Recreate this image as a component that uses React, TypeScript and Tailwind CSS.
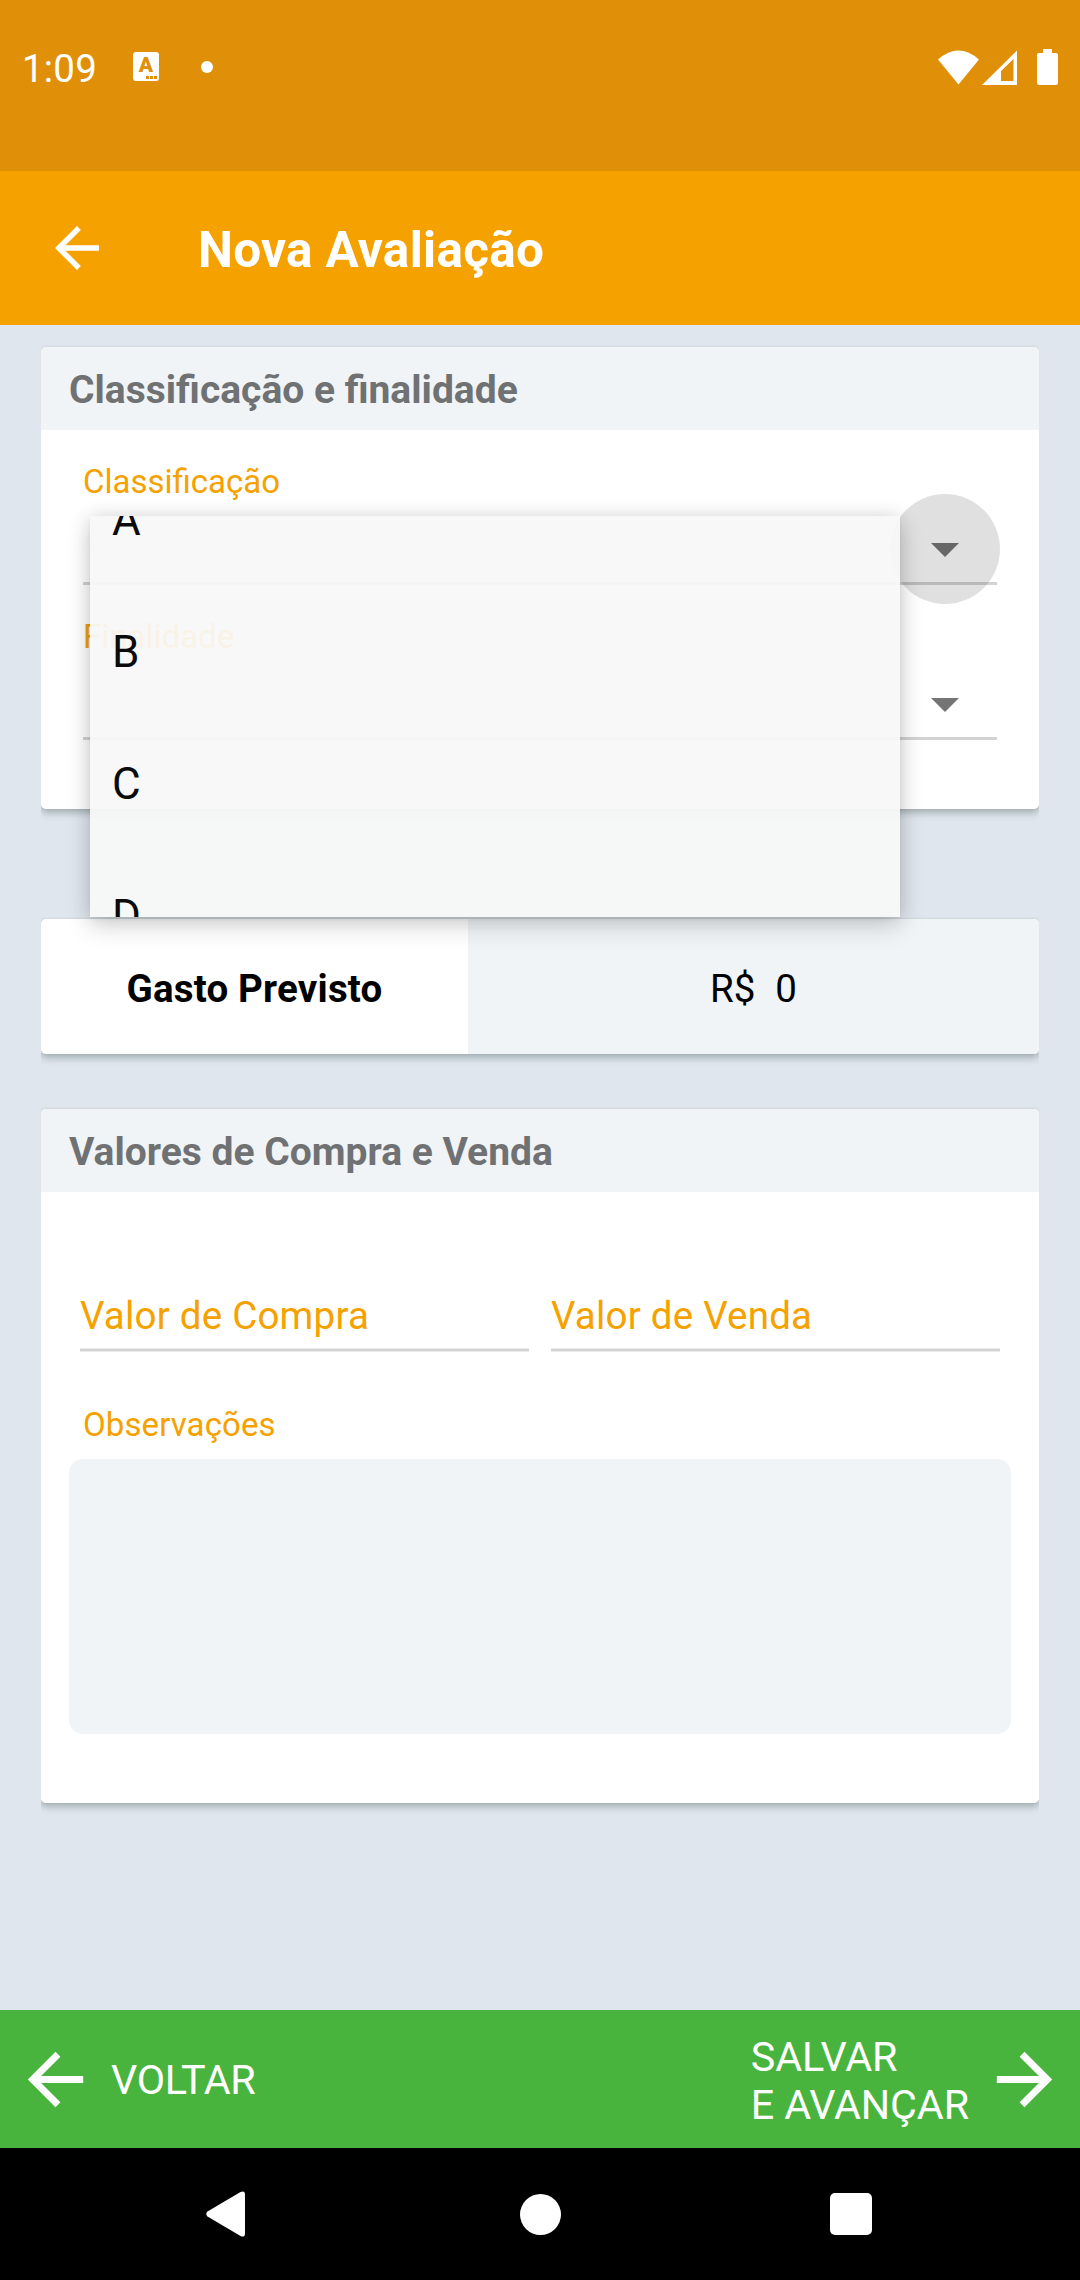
import React from "react";

const ARROW_LEFT = "M20 11H7.83l5.59-5.59L12 4l-8 8 8 8 1.41-1.41L7.83 13H20v-2z";
const ARROW_RIGHT = "M12 4l-1.41 1.41L16.17 11H4v2h12.17l-5.58 5.59L12 20l8-8z";

function StatusBar() {
  return (
    <div className="h-[171px] bg-[#df9008] flex items-start justify-between pl-[22px] pr-[22px]">
      <div className="flex items-center h-[94px] mt-[22px] text-white">
        <span className="w-[111px] text-[38.5px] leading-[46px] tracking-[0.2px]">1:09</span>
        <span className="relative w-[26px] h-[29px] -mt-[5px] rounded-[3px] bg-white block">
          <span className="absolute inset-x-0 top-[3px] text-center text-[21px] leading-[21px] font-black text-[#df9008]">A</span>
          <span className="absolute right-[2px] bottom-[2px] flex gap-[1px]">
            <i className="block size-[3px] bg-[#df9008]" />
            <i className="block size-[3px] bg-[#df9008]" />
            <i className="block size-[3px] bg-[#df9008]" />
          </span>
        </span>
        <span className="ml-[42px] size-3 -mt-[4px] rounded-full bg-white" />
      </div>
      <svg className="mt-[49px]" width="120" height="37" viewBox="938 49 120 37" fill="#fff">
        <path d="M938 59.5Q958.500 41.500 979 59.500L958.500 84.500z" />
        <path fillRule="evenodd" d="M982 85L1017 50.500V85zM1001 71V81H1013.500V59z" />
        <path d="M1043 49h9v4h4a2 2 0 0 1 2 2v28a2 2 0 0 1-2 2h-17a2 2 0 0 1-2-2V55a2 2 0 0 1 2-2h4z" />
      </svg>
    </div>
  );
}

function Card({ className, children }: { className: string; children: React.ReactNode }) {
  return (
    <section className={"[clip-path:inset(-2px_0_-14px_0)] " + className}>
      <div className="h-full overflow-hidden rounded-[5px] bg-white">{children}</div>
    </section>
  );
}

const CARD_SHADOW = "rounded-[5px] shadow-[0_4px_7px_rgba(60,80,80,0.36),0_0_2px_rgba(0,0,0,0.1)]";

function CardHeader({ children }: { children: React.ReactNode }) {
  return (
    <h2 className="h-[83px] bg-[#f0f4f7] pl-[28px] text-[39px] leading-[86px] font-bold text-[#6f7173]">
      {children}
    </h2>
  );
}

function SelectField({ label, active }: { label: string; active?: boolean }) {
  return (
    <div className="relative h-[123px] border-b-[3px] border-[#d3d3d3]">
      {active && <span className="absolute right-[-3px] top-[32px] size-[110px] rounded-full bg-black/12" />}
      <label className="block text-[33px] leading-[39px] text-[#f5a100]">{label}</label>
      <svg className="absolute right-[38px] top-[81px]" width="28" height="14" viewBox="0 0 28 14">
        <path d="M0 0H28L14 14z" fill={active ? "#676767" : "#757575"} />
      </svg>
    </div>
  );
}

function ValueField({ label }: { label: string }) {
  return (
    <div className="flex-1">
      <div className="h-[55px] text-[38.5px] leading-[46px] tracking-[0.22px] text-[#f5a100]">{label}</div>
      <div className="h-[4px] bg-[#d3d3d3] border-y border-[#ebebeb]" />
    </div>
  );
}

function OptionsPopup() {
  return (
    <div className="absolute left-[90px] top-[191px] w-[810px] h-[401px] bg-[#f7f7f7]/[0.935] shadow-[0_10px_24px_rgba(0,0,0,0.15),0_0_18px_rgba(0,0,0,0.12),0_2px_3px_rgba(0,0,0,0.05)]">
      <ul className="h-full overflow-hidden">
        <li className="-mt-[62px] h-[132px] pl-[22px] text-[44px] leading-[132px] text-[#0b0b0b]">A</li>
        {["B", "C", "D"].map((o) => (
          <li key={o} className="h-[132px] pl-[22px] text-[44px] leading-[132px] text-[#0b0b0b]">{o}</li>
        ))}
      </ul>
    </div>
  );
}

export default function App() {
  return (
    <div className="w-[1080px] h-[2280px] overflow-hidden flex flex-col bg-[#dfe6ed] font-['Roboto',sans-serif]">
      <StatusBar />
      <header className="h-[154px] bg-[#f5a100] flex items-center">
        <svg className="ml-[44px]" width="66" height="66" viewBox="0 0 24 24" fill="#fff">
          <path d={ARROW_LEFT} />
        </svg>
        <h1 className="ml-[88px] mt-[4px] text-[49.5px] leading-[58px] font-bold tracking-[0.3px] text-white">Nova Avaliação</h1>
      </header>

      <main className="relative flex-1 px-[41px] pt-[22px]">
        <Card className={"h-[462px] " + CARD_SHADOW}>
          <CardHeader>Classificação e finalidade</CardHeader>
          <div className="flex flex-col gap-8 pt-8 px-[42px]">
            <SelectField label="Classificação" active />
            <SelectField label="Finalidade" />
          </div>
        </Card>

        <Card className={"mt-[110px] h-[135px] " + CARD_SHADOW}>
          <div className="flex h-full text-[38.5px] text-black leading-[46px] items-stretch">
            <div className="w-[427px] flex items-center justify-center pt-[4px] font-bold tracking-[0.2px]">Gasto Previsto</div>
            <div className="flex-1 flex items-center justify-center pt-[4px] bg-[#f0f4f7] whitespace-pre tracking-[0.2px]">R$  0</div>
          </div>
        </Card>

        <Card className={"mt-[55px] h-[694px] " + CARD_SHADOW}>
          <CardHeader>Valores de Compra e Venda</CardHeader>
          <div className="flex gap-[22px] px-[39px] pt-[101px]">
            <ValueField label="Valor de Compra" />
            <ValueField label="Valor de Venda" />
          </div>
          <div className="mt-[53px] ml-[42px] text-[33px] leading-[39px] tracking-[0.1px] text-[#f5a100]">Observações</div>
          <div className="mt-[15px] mx-[28px] h-[275px] rounded-[14px] bg-[#f0f4f7]" />
        </Card>

        <OptionsPopup />
      </main>

      <footer className="h-[138px] bg-[#48b43d] flex items-center justify-between px-[14px] text-white text-[41.25px] leading-[48px]">
        <button className="flex items-center gap-[14px]">
          <svg width="83" height="83" viewBox="0 0 24 24" fill="#fff">
            <path d={ARROW_LEFT} />
          </svg>
          <span className="pt-[2px] tracking-[-0.35px]">VOLTAR</span>
        </button>
        <button className="flex items-center gap-[14px] text-left">
          <span className="pt-[4px] tracking-[-0.1px]">SALVAR<br />E AVANÇAR</span>
          <svg width="83" height="83" viewBox="0 0 24 24" fill="#fff">
            <path d={ARROW_RIGHT} />
          </svg>
        </button>
      </footer>

      <nav className="h-[132px] bg-black flex items-center pl-[206px]">
        <svg width="39" height="46" viewBox="0 0 39 46" fill="#fff">
          <path d="M1.500 20.500L34.500 1Q39 -1 39 3.500V42.500Q39 47 34.500 45L1.500 25.500Q-1 23 1.500 20.500z" />
        </svg>
        <span className="ml-[275px] size-[41px] rounded-full bg-white" />
        <span className="ml-[269px] w-[42px] h-[42px] rounded-[5px] bg-white" />
      </nav>
    </div>
  );
}
